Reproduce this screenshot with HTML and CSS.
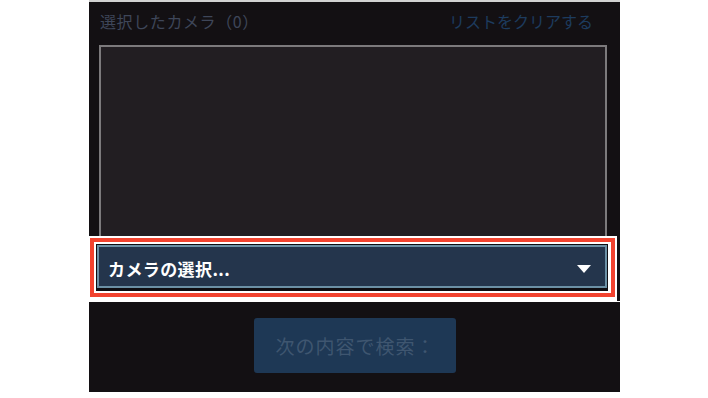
FILE: index.html
```html
<!DOCTYPE html>
<html lang="ja">
<head>
<meta charset="utf-8">
<link rel="stylesheet" href="styles.css">
</head>
<body>
<div class="page">
  <div class="panel-top">
    <div class="header">
      <span class="title">選択したカメラ（0）</span>
      <span class="clear">リストをクリアする</span>
    </div>
    <div class="listbox"></div>
  </div>
  <div class="hl-row">
    <div class="hl-frame">
      <div class="hl-red">
        <div class="hl-dark">
          <div class="dropdown">
            <span class="dd-text">カメラの選択...</span>
            <span class="dd-arrow"></span>
          </div>
        </div>
      </div>
    </div>
    <div class="hl-strip"></div>
  </div>
  <div class="panel-bottom">
    <div class="search-btn">次の内容で検索：</div>
  </div>
</div>
</body>
</html>
```

FILE: styles.css
```css
html, body {
  margin: 0;
  padding: 0;
  background: #ffffff;
}
body {
  font-family: "Noto Sans CJK JP", "Noto Sans", sans-serif;
}
.page {
  margin-left: 89px;
  width: 531px;
  display: flex;
  flex-direction: column;
}
.panel-top {
  background: #131013;
  border-top: 2px solid #d2d2d2;
  height: 234px;
  display: flex;
  flex-direction: column;
}
.header {
  height: 43px;
  display: flex;
  align-items: center;
  justify-content: space-between;
  padding: 0 27px 0 11px;
  font-size: 16px;
  line-height: 1;
}
.title {
  color: #3e4659;
  margin-top: -6px;
  letter-spacing: 0.6px;
}
.clear {
  color: #1d3b5e;
  margin-top: -6px;
}
.listbox {
  margin-left: 10px;
  width: 504px;
  flex: 1;
  background: #221e22;
  border: 2px solid #7c7a7c;
  border-bottom: none;
}
.hl-row {
  display: flex;
  height: 65px;
}
.hl-frame {
  width: 528px;
  box-sizing: border-box;
  padding: 2px 2px 4px 1px;
  background: #ffffff;
}
.hl-red {
  border: 4px solid #f2432f;
  padding: 2px 3px 2px 2px;
  background: #ffffff;
}
.hl-dark {
  background: #0f0d11;
  padding: 1px 1px 3px 1px;
}
.dropdown {
  height: 43px;
  box-sizing: border-box;
  border: 2px solid #6b90a5;
  background: #24354c;
  display: flex;
  align-items: center;
  justify-content: space-between;
  padding: 4px 14px 0 9px;
}
.dd-text {
  color: #ffffff;
  font-weight: bold;
  font-size: 17px;
  letter-spacing: 0.4px;
}
.dd-arrow {
  width: 0;
  height: 0;
  border-left: 7px solid transparent;
  border-right: 7px solid transparent;
  border-top: 8px solid #ffffff;
}
.hl-strip {
  width: 3px;
  background: #131013;
}
.panel-bottom {
  margin-top: 1px;
  height: 90px;
  background: #131013;
  display: flex;
  justify-content: center;
  align-items: flex-start;
  padding-top: 16px;
  box-sizing: border-box;
}
.search-btn {
  width: 202px;
  height: 55px;
  box-sizing: border-box;
  background: #1e3855;
  border-radius: 3px;
  color: #3f5670;
  font-size: 19px;
  letter-spacing: 1px;
  padding-left: 2px;
  display: flex;
  align-items: center;
  justify-content: center;
}
```
